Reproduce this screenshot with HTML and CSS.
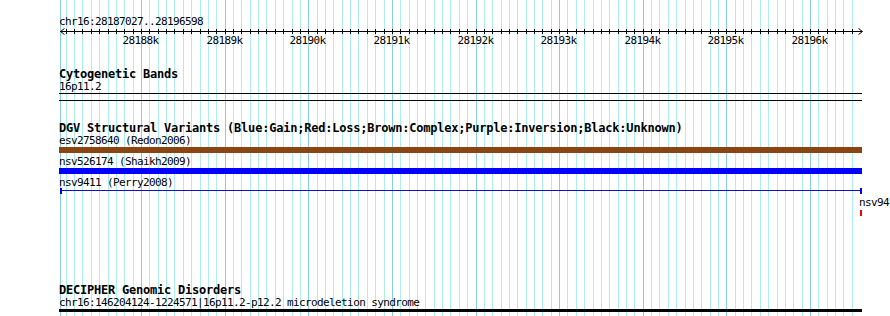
FILE: index.html
```html
<!DOCTYPE html>
<html lang="en">
<head>
  <meta charset="UTF-8" />
  <title>chr16:28187027..28196598</title>
  <link rel="stylesheet" href="styles.css">
</head>
<body>
  <div class="panel">
    <svg class="grid" id="grid" width="890" height="316"></svg>
    <div class="tracks">
      <div class="locus">chr16:28187027..28196598</div>
      <svg class="ruler" id="ruler" width="804" height="20"></svg>

      <section class="track cyto">
        <h3 class="track-title">Cytogenetic Bands</h3>
        <div class="label">16p11.2</div>
        <div class="band-line"></div>
        <div class="band-line sep"></div>
      </section>

      <section class="track dgv">
        <h3 class="track-title">DGV Structural Variants (Blue:Gain;Red:Loss;Brown:Complex;Purple:Inversion;Black:Unknown)</h3>
        <div class="label">esv2758640 (Redon2006)</div>
        <div class="bar complex"></div>
        <div class="label">nsv526174 (Shaikh2009)</div>
        <div class="bar gain"></div>
        <div class="label">nsv9411 (Perry2008)</div>
        <div class="span-feature">
          <span class="cap"></span>
          <span class="span-line"></span>
          <span class="cap"></span>
        </div>
        <div class="label edge">nsv94</div>
        <div class="loss-mark"></div>
      </section>

      <section class="track decipher">
        <h3 class="track-title">DECIPHER Genomic Disorders</h3>
        <div class="label">chr16:146204124-1224571|16p11.2-p12.2 microdeletion syndrome</div>
        <div class="bar disorder"></div>
      </section>
    </div>
  </div>

  <script>
    const NS = 'http://www.w3.org/2000/svg';
    const grid = document.getElementById('grid');
    const ruler = document.getElementById('ruler');
    const offset = 59;

    // bp -> pixel column in the panel
    const px = (bp) => Math.round(141 + (bp - 28188000) * 0.083625);

    function rect(parent, x, y, w, h, cls) {
      const r = document.createElementNS(NS, 'rect');
      r.setAttribute('x', x);
      r.setAttribute('y', y);
      r.setAttribute('width', w);
      r.setAttribute('height', h);
      r.setAttribute('class', cls);
      parent.appendChild(r);
    }

    rect(grid, 60, 0, 1, 316, 'grid-edge');
    rect(ruler, 1, 3, 802, 1, 'tick');

    for (let bp = 28187100; bp <= 28196500; bp += 100) {
      const x = px(bp);
      const major = bp % 1000 === 0;
      rect(grid, x, 0, 1, 316, major ? 'grid-major' : 'grid-minor');
      rect(ruler, x - offset, 1, 1, 5, 'tick');

      if (major) {
        const t = document.createElementNS(NS, 'text');
        t.setAttribute('x', x - offset - 0.5);
        t.setAttribute('y', 15.5);
        t.setAttribute('class', 'ruler-label');
        t.textContent = (bp / 1000) + 'k';
        ruler.appendChild(t);
      }
    }

    const arrows = document.createElementNS(NS, 'path');
    arrows.setAttribute('d', 'M5.5,0.5 L1.5,3.5 L5.5,6.5 M799.5,0.5 L803.5,3.5 L799.5,6.5');
    arrows.setAttribute('class', 'arrow');
    ruler.appendChild(arrows);
  </script>
</body>
</html>
```

FILE: styles.css
```css
* {
  box-sizing: border-box;
}
body {
  margin: 0;
  background: #fff;
}
.panel {
  position: relative;
  width: 890px;
  height: 316px;
  overflow: hidden;
  font-family: "DejaVu Sans Mono", monospace;
  font-size: 11px;
  line-height: 13px;
  letter-spacing: -0.62px;
  color: #000;
}
.grid {
  position: absolute;
  left: 0;
  top: 0;
}
.grid-minor {
  fill: #afeeee;
}
.grid-major,
.grid-edge {
  fill: #87ceeb;
}
.tracks {
  position: relative;
  padding-left: 59px;
  padding-top: 15px;
}
.locus,
.label {
  height: 13px;
  white-space: nowrap;
}
.ruler {
  display: block;
  overflow: visible;
}
.tick {
  fill: #000;
}
.arrow {
  fill: none;
  stroke: #000;
  stroke-width: 1;
}
.ruler-label {
  font-family: "DejaVu Sans Mono", monospace;
  font-size: 11px;
  letter-spacing: -0.62px;
  text-anchor: middle;
  fill: #000;
}
.track-title {
  margin: 0;
  height: 13px;
  padding-top: 1px;
  font-size: 12px;
  font-weight: bold;
  line-height: 13px;
  letter-spacing: -0.22px;
  white-space: nowrap;
}
.cyto {
  margin-top: 19px;
}
.band-line {
  width: 803px;
  height: 1px;
  background: #000;
}
.band-line.sep {
  margin-top: 6px;
}
.dgv {
  margin-top: 20px;
}
.bar {
  width: 803px;
  height: 6px;
}
.bar + .label {
  margin-top: 2px;
}
.bar.complex {
  background: #8b4513;
}
.bar.gain {
  background: #0000ff;
}
.span-feature {
  display: flex;
  width: 802px;
  height: 6px;
  margin: -1px 0 0 1px;
}
.cap {
  width: 2px;
  height: 6px;
  background: #0000ff;
}
.span-line {
  flex: 1;
  height: 1px;
  margin-top: 2px;
  background: #1010c8;
}
.label.edge {
  margin: 2px 0 0 800px;
}
.loss-mark {
  width: 2px;
  height: 6px;
  margin: 1px 0 0 801px;
  background: #ff0000;
}
.decipher {
  margin-top: 67px;
}
.bar.disorder {
  height: 3px;
  margin-top: 0;
  background: #000;
}
```
